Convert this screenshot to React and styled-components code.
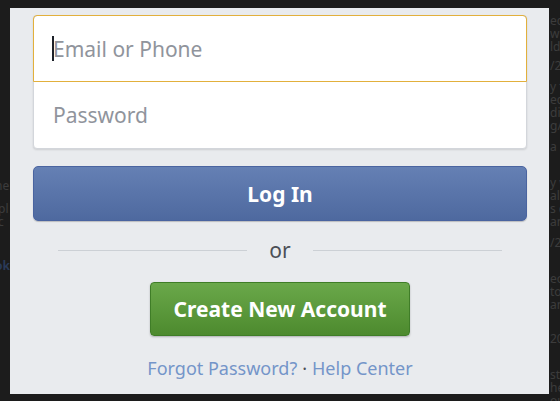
import React from 'react';
import styled, { createGlobalStyle } from 'styled-components';

const GlobalStyle = createGlobalStyle`
  html, body {
    margin: 0;
    padding: 0;
    background: #1c1c1c;
    overflow: hidden;
  }
  * { box-sizing: border-box; }
`

const Screen = styled.div`
  position: relative;
  width: 560px;
  height: 401px;
  overflow: hidden;
  background: #1c1c1c;
  font-family: "Noto Sans", "Open Sans", sans-serif;
`

// the dimmed page behind the dialog
const Backdrop = styled.div`
  display: flex;
  justify-content: space-between;
  height: 100%;
  color: #3c3c3c;
  font-size: 12px;
  line-height: 13px;
`

const BackCol = styled.div`
  width: ${p => p.w}px;
  margin-left: ${p => p.shift || 0}px;
  white-space: nowrap;
  overflow: hidden;
`

const BackBlock = styled.div`
  margin-top: ${p => p.gap}px;
  color: ${p => (p.link ? '#2a3a58' : '#3c3c3c')};
  font-weight: ${p => (p.link ? 'bold' : 'normal')};
`

const Modal = styled.div`
  position: absolute;
  left: 10px;
  top: 8px;
  width: 539px;
  height: 386px;
  background: #e9ebee;
  display: flex;
  flex-direction: column;
  align-items: center;
  padding: 7px 22px 0 23px;
`

const Fields = styled.div`
  width: 494px;
  background: #fff;
  border: 1px solid #d3d6db;
  border-radius: 4px;
  box-shadow: 0 1px 2px rgba(0, 0, 0, 0.12);
  display: flex;
  flex-direction: column;
`

const Field = styled.div`
  height: ${p => p.h}px;
  display: flex;
  align-items: center;
  padding-left: 18px;
  font-size: 21px;
  color: #90949c;
  border: 1px solid ${p => (p.focus ? '#e2b03c' : 'transparent')};
  border-radius: ${p => (p.focus ? '4px 4px 0 0' : '0')};
  margin: ${p => (p.focus ? '-1px -1px 0' : '0')};
`

const Caret = styled.span`
  display: inline-block;
  width: 2px;
  height: 25px;
  background: #1d2129;
  margin-right: -1px;
`

const LoginButton = styled.button`
  margin-top: 17px;
  width: 494px;
  height: 55px;
  border: 1px solid #4a64a0;
  border-radius: 5px;
  background: linear-gradient(#6580b4, #4e699f);
  box-shadow: 0 1px 1px rgba(0, 0, 0, 0.2);
  color: #fff;
  font-family: inherit;
  font-size: 21px;
  font-weight: bold;
  padding: 0;
`

const Divider = styled.div`
  margin-top: 12px;
  width: 444px;
  height: 34px;
  display: flex;
  align-items: center;
  gap: 22px;
  color: #4b4f56;
  font-size: 21px;
  &::before, &::after {
    content: "";
    flex: 1;
    height: 1px;
    background: #ccd0d5;
  }
`

const CreateButton = styled.button`
  margin-top: 15px;
  width: 260px;
  height: 54px;
  border: 1px solid #3f7d27;
  border-radius: 4px;
  background: linear-gradient(#6aa84a, #4d8a2e);
  box-shadow: 0 1px 2px rgba(0, 0, 0, 0.25);
  color: #fff;
  font-family: inherit;
  font-size: 21px;
  font-weight: bold;
  padding: 0;
`

const Links = styled.div`
  margin-top: 20px;
  font-size: 18px;
  color: #7495c9;
  display: flex;
  gap: 5px;
`

const Dot = styled.span`
  color: #4b4f56;
`

const leftBlocks = [
  { gap: 179, lines: ['ne'] },
  { gap: 10, lines: ['ipl', 'ic'] },
  { gap: 3, lines: [':'] },
  { gap: 15, lines: ['ok'], link: true },
]

const rightBlocks = [
  { gap: 14, lines: ['ect', 'with', 'ld'] },
  { gap: 6, lines: ['/20'] },
  { gap: 8, lines: ['y to', 'ect', 'dic', 'g/w'] },
  { gap: 8, lines: ['a'] },
  { gap: 23, lines: ['y w', 'al,', 's d', 'an'] },
  { gap: 8, lines: ['/20'] },
  { gap: 23, lines: ['eo', 'to', 'an'] },
  { gap: 21, lines: ['20'] },
  { gap: 23, lines: ['st', 'he', 'ou'] },
]

const renderBlocks = blocks =>
  blocks.map((b, i) => (
    <BackBlock key={i} gap={b.gap} link={b.link}>
      {b.lines.map((l, j) => <div key={j}>{l}</div>)}
    </BackBlock>
  ))

export default function App() {
  return (
    <Screen>
      <GlobalStyle />
      <Backdrop>
        <BackCol w={16} shift={-5}>{renderBlocks(leftBlocks)}</BackCol>
        <BackCol w={10}>{renderBlocks(rightBlocks)}</BackCol>
      </Backdrop>

      <Modal>
        <Fields>
          <Field h={67} focus>
            <Caret />Email or Phone
          </Field>
          <Field h={66}>Password</Field>
        </Fields>
        <LoginButton>Log In</LoginButton>
        <Divider>or</Divider>
        <CreateButton>Create New Account</CreateButton>
        <Links>
          <span>Forgot Password?</span>
          <Dot>·</Dot>
          <span>Help Center</span>
        </Links>
      </Modal>
    </Screen>
  );
}
